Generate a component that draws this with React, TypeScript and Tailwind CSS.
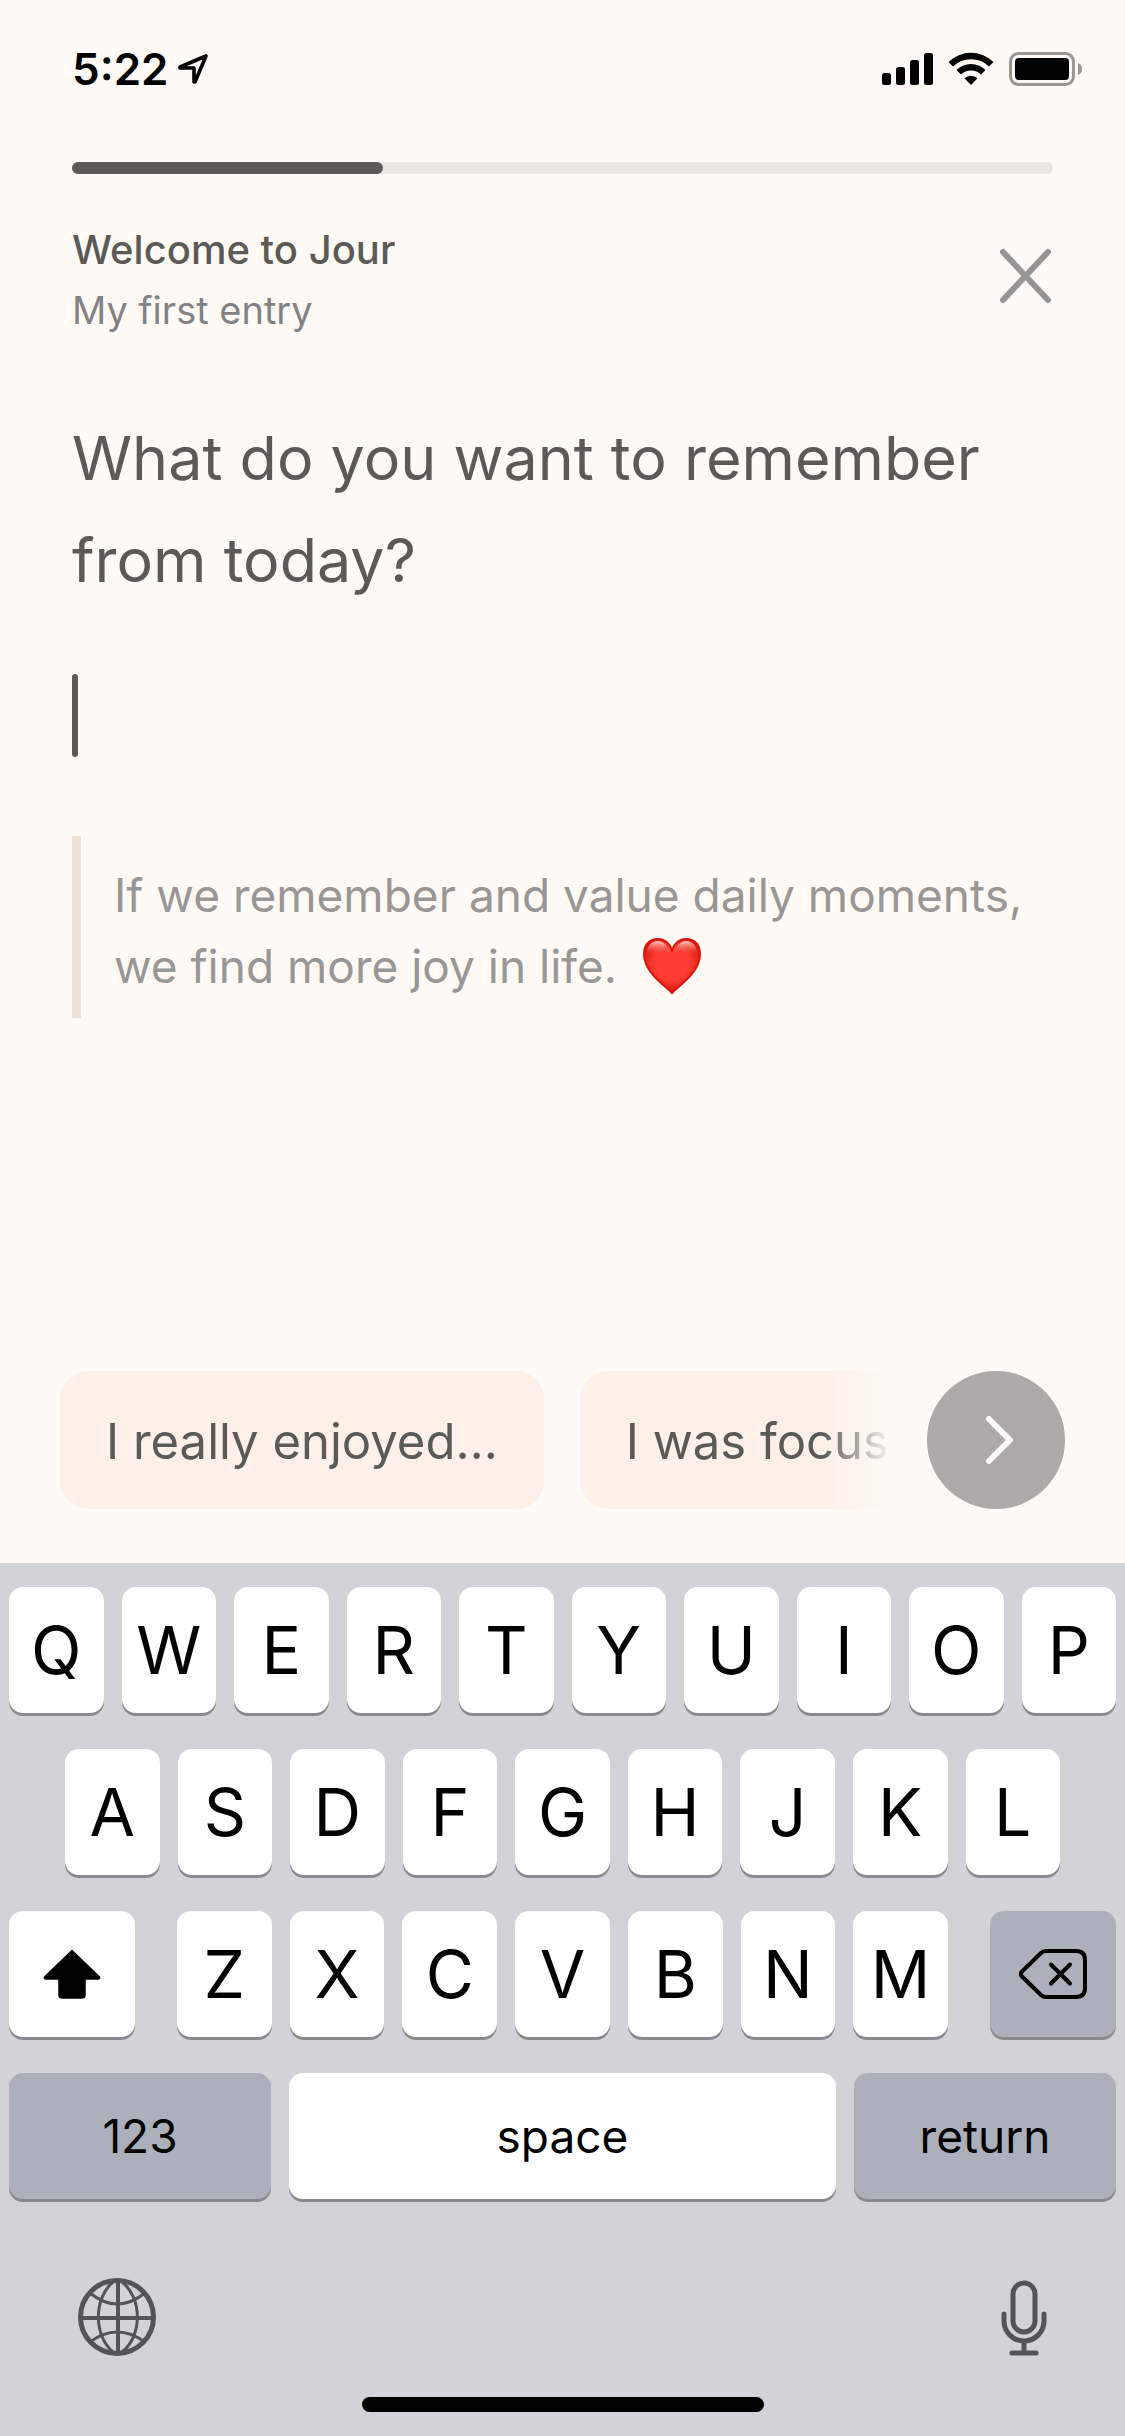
import type { ReactNode } from "react";

const topRow = ["Q", "W", "E", "R", "T", "Y", "U", "I", "O", "P"];
const middleRow = ["A", "S", "D", "F", "G", "H", "J", "K", "L"];
const bottomRow = ["Z", "X", "C", "V", "B", "N", "M"];
const prompts = ["I really enjoyed…", "I was focus"];

function StatusBar() {
  return (
    <div className="flex h-[138px] items-center justify-between pr-[43px] pl-[72px]">
      <div className="flex items-center gap-2">
        <span className="text-[44px] leading-[54px] font-semibold text-black">5:22</span>
        <svg width="32" height="32" viewBox="0 0 32 32" fill="none">
          <path
            d="M29 3 L3 14 V15 H17 V29 H18 Z"
            stroke="black"
            strokeWidth="3.6"
            strokeLinejoin="round"
          />
        </svg>
      </div>
      <div className="flex items-center gap-[15px]">
        <svg width="51" height="34" viewBox="0 0 51 34">
          <rect x="0" y="21" width="9" height="12" rx="2.5" />
          <rect x="14" y="15" width="9" height="18" rx="2.5" />
          <rect x="28" y="8" width="9" height="25" rx="2.5" />
          <rect x="42" y="1" width="9" height="32" rx="2.5" />
        </svg>
        <svg width="46" height="34" viewBox="0 0 46 34">
          <path d="M0.5 10 A32 32 0 0 1 45.5 10 L41 14.6 A25.5 25.5 0 0 0 5 14.6 Z" />
          <path d="M8.5 18 A20.5 20.5 0 0 1 37.5 18 L33 22.6 A14.2 14.2 0 0 0 13 22.6 Z" />
          <path d="M16.5 26.2 A9.5 9.5 0 0 1 29.5 26.2 L23 33 Z" />
        </svg>
        <svg width="73" height="34" viewBox="0 0 73 34">
          <rect x="1.5" y="1.5" width="63" height="31" rx="8" fill="none" stroke="#9b9795" strokeWidth="3" />
          <rect x="6" y="6" width="54" height="22" rx="4" />
          <path d="M69 11 A6.5 6.5 0 0 1 69 23 Z" fill="#9b9795" />
        </svg>
      </div>
    </div>
  );
}

function Key({
  children,
  label,
  className = "flex-1 bg-white text-[66px]",
}: {
  children: ReactNode;
  label?: string;
  className?: string;
}) {
  return (
    <button
      type="button"
      aria-label={label}
      className={`flex h-[126px] min-w-0 items-center justify-center rounded-[14px] text-black shadow-[0_3px_0_#898a8d] ${className}`}
    >
      {children}
    </button>
  );
}

function Keyboard() {
  return (
    <div className="bg-[#d2d3d8] px-[9px] pt-6 pb-6 leading-none">
      <div className="flex flex-col gap-9">
        <div className="flex gap-[18px]">
          {topRow.map((letter) => (
            <Key key={letter}>{letter}</Key>
          ))}
        </div>
        <div className="flex gap-[18px] px-14">
          {middleRow.map((letter) => (
            <Key key={letter}>{letter}</Key>
          ))}
        </div>
        <div className="flex gap-[42px]">
          <Key label="Shift" className="w-[126px] bg-white">
            <svg width="58" height="52" viewBox="0 0 58 52">
              <path
                d="M29 2.5 L56.5 29 Q57 31 55 31 H42 V47 Q42 50 39 50 H19 Q16 50 16 47 V31 H3 Q1 31 1.5 29 Z"
                stroke="black"
                strokeWidth="1.5"
                strokeLinejoin="round"
              />
            </svg>
          </Key>
          <div className="flex min-w-0 flex-1 gap-[18px]">
            {bottomRow.map((letter) => (
              <Key key={letter}>{letter}</Key>
            ))}
          </div>
          <Key label="Delete" className="w-[126px] bg-[#abb0ba]">
            <svg
              width="68"
              height="50"
              viewBox="0 0 68 50"
              fill="none"
              stroke="black"
              strokeWidth="4"
              strokeLinecap="round"
              strokeLinejoin="round"
            >
              <path d="M27 2 H57 Q66 2 66 11 V39 Q66 48 57 48 H27 Q24 48 22 46 L2.5 27 Q1 25 2.5 23 L22 4 Q24 2 27 2 Z" />
              <path d="M32 15.5 L51 34.5 M51 15.5 L32 34.5" />
            </svg>
          </Key>
        </div>
        <div className="flex gap-[18px]">
          <Key className="w-[262px] bg-[#abb0ba] text-[46px]">123</Key>
          <Key className="flex-1 bg-white text-[46px]">space</Key>
          <Key className="w-[262px] bg-[#abb0ba] text-[46px]">return</Key>
        </div>
      </div>
      <div className="flex items-end justify-between px-[69px] pt-[79px]">
        <button type="button" aria-label="Next keyboard">
          <svg width="78" height="78" viewBox="0 0 78 78" fill="none" stroke="#50555a" strokeWidth="3">
            <circle cx="39" cy="39" r="36.5" strokeWidth="5" />
            <path d="M40 3 V75 M3 40 H75" strokeWidth="4" />
            <path d="M35 4 C15.5 20 15.5 58 35 74 M44 4 C64.5 20 64.5 58 44 74" />
            <path d="M12 15 Q39 37 67 15 M12 64 Q39 44 67 64" />
          </svg>
        </button>
        <button type="button" aria-label="Dictate">
          <svg
            width="46"
            height="76"
            viewBox="0 0 46 76"
            fill="none"
            stroke="#50555a"
            strokeWidth="5"
            strokeLinecap="round"
          >
            <rect x="12" y="3" width="22" height="49" rx="11" />
            <path d="M3 34 V41 A20 20 0 0 0 43 41 V34 M23 61 V73 M11 73 H35" />
          </svg>
        </button>
      </div>
      <div className="mx-auto mt-[41px] h-[15px] w-[402px] rounded-full bg-black" />
    </div>
  );
}

function Heart() {
  return (
    <svg
      className="ml-3 inline-block align-[-11px]"
      width="60"
      height="57"
      viewBox="0 0 60 57"
      role="img"
      aria-label="heart"
    >
      <defs>
        <radialGradient id="heartFill" cx="0.5" cy="0.45" r="0.6">
          <stop offset="0.5" stopColor="#ff3d33" />
          <stop offset="1" stopColor="#d0140b" />
        </radialGradient>
        <linearGradient id="heartShine" x1="0" y1="0" x2="0" y2="1">
          <stop offset="0" stopColor="#ffc9c3" />
          <stop offset="1" stopColor="#ff5a4e" stopOpacity="0" />
        </linearGradient>
      </defs>
      <path
        d="M30 56 C24 49 2 36 2 17 C2 7 8 2 16 2 C23 2 28 7 30 13 C32 7 37 2 44 2 C52 2 58 7 58 17 C58 36 36 49 30 56 Z"
        fill="url(#heartFill)"
        stroke="#d9150d"
        strokeWidth="2"
      />
      <path d="M5 17 C5 8 10 4 16 4 C22 4 26 9 28 17 Z" fill="url(#heartShine)" />
      <path d="M55 17 C55 8 50 4 44 4 C38 4 34 9 32 17 Z" fill="url(#heartShine)" />
    </svg>
  );
}

export default function App() {
  return (
    <div className="flex min-h-screen flex-col bg-[#fffaf5] font-['Inter',sans-serif] text-[#5b5a57]">
      <StatusBar />
      <main className="flex flex-1 flex-col px-[72px] pt-6">
        <div className="h-3 rounded-full bg-[#eae7e2]">
          <div className="h-3 w-[311px] rounded-full bg-[#5b5a57]" />
        </div>
        <header className="mt-[46px] flex items-start justify-between">
          <div className="leading-[60px]">
            <h1 className="text-[40px] font-medium">Welcome to Jour</h1>
            <p className="text-[38px] text-[#828284]">My first entry</p>
          </div>
          <button type="button" aria-label="Close" className="pt-7">
            <svg
              width="54"
              height="56"
              viewBox="0 0 54 56"
              stroke="#979594"
              strokeWidth="6"
              strokeLinecap="round"
            >
              <path d="M4 4 L49 52 M49 4 L4 52" />
            </svg>
          </button>
        </header>
        <label htmlFor="entry" className="mt-[67px] block text-[61px] leading-[102px]">
          What do you want to remember from today?
        </label>
        <div className="mt-[63px] flex h-[83px] items-stretch">
          <span className="w-[6px] rounded-full bg-[#5b5a57]" />
          <input
            id="entry"
            type="text"
            className="min-w-0 flex-1 bg-transparent text-[61px] outline-none"
          />
        </div>
        <blockquote className="mt-[79px] border-l-[9px] border-[#eee2d6] pt-6 pb-4 pl-[33px] text-[46px] leading-[71px] text-[#999795]">
          If we remember and value daily moments, we find more joy in life. <Heart />
        </blockquote>
      </main>
      <div className="flex items-center justify-between gap-9 px-[60px] pb-[54px]">
        <div className="flex min-w-0 flex-1 gap-9 overflow-hidden mask-r-from-[762px] mask-r-to-[832px] text-[49px] whitespace-nowrap">
          {prompts.map((prompt) => (
            <button
              key={prompt}
              type="button"
              className="h-[138px] shrink-0 rounded-[28px] bg-[#fdf0e9] px-[46px] pt-1"
            >
              {prompt}
            </button>
          ))}
        </div>
        <button
          type="button"
          aria-label="Next"
          className="flex size-[138px] shrink-0 items-center justify-center rounded-full bg-[#ada9a6]"
        >
          <svg
            className="ml-2"
            width="30"
            height="52"
            viewBox="0 0 30 52"
            fill="none"
            stroke="white"
            strokeWidth="6"
            strokeLinecap="round"
            strokeLinejoin="round"
          >
            <path d="M4 5 L25 26 L4 47" />
          </svg>
        </button>
      </div>
      <Keyboard />
    </div>
  );
}
